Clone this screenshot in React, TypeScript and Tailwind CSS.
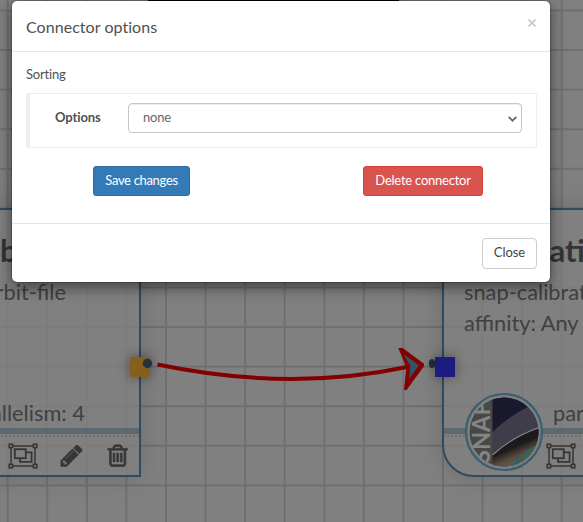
import React from "react";

const GRID = 39.57;

function GroupIcon() {
  return (
    <svg className="h-[26px] w-[30px] shrink-0" viewBox="0 0 30 26" fill="none" stroke="#363636">
      <rect x="3" y="3" width="24" height="20" strokeWidth="1.5" />
      <rect x="6.8" y="6.2" width="11" height="9" strokeWidth="1.8" />
      <path d="M18 9.3h5.6v9.6H12v-3.6" strokeWidth="1.8" />
      <g fill="#808080" strokeWidth="1.6">
        <rect x="1.2" y="1.2" width="3.4" height="3.4" />
        <rect x="25.4" y="1.2" width="3.4" height="3.4" />
        <rect x="1.2" y="21.4" width="3.4" height="3.4" />
        <rect x="25.4" y="21.4" width="3.4" height="3.4" />
      </g>
    </svg>
  );
}

function PencilIcon() {
  return (
    <svg className="size-[25.3px] shrink-0" viewBox="0 0 1792 1792" fill="#363636" stroke="#363636" strokeWidth="30">
      <path d="M491 1536l91-91-235-235-91 91v107h128v128h107zm523-928q0-22-22-22-10 0-17 7l-542 542q-7 7-7 17 0 22 22 22 10 0 17-7l542-542q7-7 7-17zm-54-192l416 416-832 832h-416v-416zm683 96q0 53-37 90l-166 166-416-416 166-165q36-38 90-38 53 0 91 38l235 234q37 39 37 91z" />
    </svg>
  );
}

function TrashIcon() {
  return (
    <svg className="size-[25.3px] shrink-0" viewBox="0 0 1792 1792" fill="#363636" stroke="#363636" strokeWidth="50">
      <path d="M704 736v576q0 14-9 23t-23 9h-64q-14 0-23-9t-9-23v-576q0-14 9-23t23-9h64q14 0 23 9t9 23zm256 0v576q0 14-9 23t-23 9h-64q-14 0-23-9t-9-23v-576q0-14 9-23t23-9h64q14 0 23 9t9 23zm256 0v576q0 14-9 23t-23 9h-64q-14 0-23-9t-9-23v-576q0-14 9-23t23-9h64q14 0 23 9t9 23zm128 724v-948h-896v948q0 22 7 40.5t14.5 27 10.5 8.5h832q3 0 10.5-8.5t14.5-27 7-40.5zm-672-1076h448l-48-117q-7-9-17-11h-317q-10 2-17 11zm928 32v64q0 14-9 23t-23 9h-96v948q0 83-47 143.5t-113 60.5h-832q-66 0-113-58.5t-47-141.5v-952h-96q-14 0-23-9t-9-23v-64q0-14 9-23t23-9h309l70-167q15-37 54-63t79-26h320q40 0 79 26t54 63l70 167h309q14 0 23 9t9 23z" />
    </svg>
  );
}

function SnapLogo() {
  return (
    <svg className="absolute left-[19.5px] top-[182px] size-[80px]" viewBox="0 0 80 80">
      <defs>
        <clipPath id="disc">
          <circle cx="40" cy="40" r="34.6" />
        </clipPath>
        <linearGradient id="earth" x1="0.3" y1="0.25" x2="0.6" y2="0.85">
          <stop offset="0" stopColor="#17171b" />
          <stop offset="0.35" stopColor="#1d1a1b" />
          <stop offset="0.65" stopColor="#5a4b40" />
          <stop offset="0.85" stopColor="#645a50" />
          <stop offset="1" stopColor="#28575a" />
        </linearGradient>
      </defs>
      <circle cx="40" cy="40" r="38" fill="#7d7d7d" stroke="#3a5f75" strokeWidth="2.2" />
      <circle cx="40" cy="40" r="35.2" fill="#929292" />
      <g clipPath="url(#disc)">
        <rect width="80" height="80" fill="#484848" />
        <rect x="28.5" width="52" height="80" fill="#3e3d49" />
        <path d="M28.5 0h52v8Q50 19 28.5 40z" fill="#19182d" />
        <path d="M28.5 63Q49 44 80 34v46H28.5z" fill="url(#earth)" />
        <path d="M28.5 63Q49 44 80 34" fill="none" stroke="#858588" strokeWidth="1.1" />
        <path d="M48 74l4-7 6-3 5-6 6-3 9-6-4 18-13 11-12 3z" fill="#2b6565" />
        <path d="M55 68l4-4 4 1 3-5 4-2 1 3-5 4-1 4-5 2zM64 60l4-4 3-1-3 5z" fill="#535a3c" />
        <path d="M50 76l6-3 5-1-4 4z" fill="#777979" />
        <text
          transform="translate(26 71) rotate(-90)"
          fill="#858585"
          fontSize="24.5"
          fontWeight="700"
          textLength="62"
          lengthAdjust="spacingAndGlyphs"
          fontFamily="Lato, sans-serif"
        >
          SNAP
        </text>
      </g>
    </svg>
  );
}

function Divider() {
  return (
    <div className="shrink-0">
      <div className="h-[6px] bg-[#5e696f]" />
      <div className="mt-px border-t-2 border-dotted border-[#6e7275]" />
    </div>
  );
}

function Canvas() {
  const columns = Array.from({ length: 15 }, (_, i) => 7.7 + i * GRID);
  const rows = Array.from({ length: 13 }, (_, i) => 10.5 + i * GRID);
  return (
    <div className="absolute inset-0 overflow-hidden bg-[#808080]">
      <svg className="absolute inset-0" width="583" height="522" stroke="#6f6f6f" strokeWidth="1.9">
        {columns.map((x) => (
          <line key={x} x1={x} x2={x} y1="0" y2="522" />
        ))}
        {rows.map((y) => (
          <line key={y} x1="0" x2="583" y1={y} y2={y} />
        ))}
      </svg>

      <section className="absolute left-[-8px] top-[208px] flex h-[269px] w-[149px] flex-col border-2 border-[#2d4c61] bg-[#808080]/80 text-[21.8px] leading-[31px] text-[#404040] shadow-[0_0_24px_rgba(0,0,0,0.15)]">
        <h2 className="mt-[20px] pl-[6px] text-[31px] font-bold leading-[40px] text-[#343434]">b</h2>
        <p className="mt-[6px] flex justify-end pr-[73px] whitespace-nowrap">rbit-file</p>
        <p className="mt-[90px] flex justify-end pr-[54px] whitespace-nowrap">allelism: 4</p>
        <div className="mt-auto">
          <Divider />
        </div>
        <div className="flex h-[40px] items-center justify-end pr-[9px]">
          <GroupIcon />
          <span className="w-[21px]" />
          <PencilIcon />
          <span className="w-[20px]" />
          <TrashIcon />
        </div>
      </section>

      <section className="absolute left-[442px] top-[208px] flex h-[269px] w-[200px] flex-col rounded-bl-[32px] border-2 border-[#2d4c61] bg-[#808080]/80 text-[21.8px] leading-[31px] text-[#404040] shadow-[0_0_24px_rgba(0,0,0,0.15)]">
        <h2 className="mt-[20px] pl-[105.5px] text-[31px] font-bold leading-[40px] text-[#343434]">ation</h2>
        <p className="mt-[6px] pl-[20px] whitespace-nowrap">snap-calibration</p>
        <p className="pl-[20px] whitespace-nowrap">affinity: Any</p>
        <p className="mt-[59px] pl-[109px] whitespace-nowrap">parallelism: 4</p>
        <div className="mt-auto">
          <Divider />
        </div>
        <div className="flex h-[40px] items-center pl-[102px]">
          <GroupIcon />
        </div>
        <SnapLogo />
      </section>

      <div className="absolute left-[130px] top-[357px] size-[20px] bg-[#855f1c] shadow-[0_0_12px_1px_rgba(0,0,0,0.35)]" />
      <svg className="absolute inset-0" width="583" height="522">
        <circle cx="147.5" cy="363.5" r="4.7" fill="#25323b" />
        <ellipse cx="432" cy="363.5" rx="3.2" ry="4.6" fill="#25323b" />
        <path d="M157.5 364.5Q290 392 407 367" fill="none" stroke="#830000" strokeWidth="4" />
        <path d="M398.3 348h4.4L424 363.8v2.4L406.6 390H404l2.3-22.5z" fill="#830000" />
        <path d="M403.6 354L419 365.2 409 379l1.3-13z" fill="#345366" />
      </svg>
      <div className="absolute left-[435px] top-[357px] size-[20px] bg-[#1c1b80] shadow-[0_0_12px_1px_rgba(0,0,0,0.35)]" />
      <div className="absolute left-[148px] top-0 h-[6px] w-[251px] bg-black" />
    </div>
  );
}

export default function App() {
  return (
    <main className="relative h-[522px] w-[583px] overflow-hidden font-[Lato,sans-serif] text-[13px] text-[#444]">
      <Canvas />
      <div
        role="dialog"
        className="relative ml-[12px] mt-px flex h-[281px] w-[538px] flex-col rounded-[5px] bg-white shadow-[0_5px_15px_rgba(0,0,0,0.5),0_0_2px_rgba(0,0,0,0.6)]"
      >
        <header className="flex h-[51px] items-center justify-between border-b border-[#e5e5e5] px-[14px]">
          <h1 className="pt-px text-[16px] leading-[20px] tracking-[0.05px] text-[#505050]">Connector options</h1>
          <button aria-label="Close dialog" className="-mt-[7px] mr-0">
            <svg className="size-[8px]" viewBox="0 0 8 8" stroke="#c8c8c8" strokeWidth="1.7">
              <path d="M.5.5l7 7M7.5.5l-7 7" />
            </svg>
          </button>
        </header>

        <div className="flex flex-1 flex-col px-[13px] pl-[14px] pt-[13px]">
          <label className="leading-[18px] tracking-[-0.2px] text-[#505050]">Sorting</label>
          <div className="mt-[10px] flex h-[55px] items-start rounded-[2px] border border-l-4 border-[#eee] pl-[25px] pr-[14px] pt-[9px]">
            <span className="w-[73px] pt-[5px] font-bold leading-[18px] tracking-[-0.1px] text-[#505050]">Options</span>
            <div className="flex h-[30px] flex-1 items-center justify-between rounded-[4px] border border-[#c6c6c6] pb-px pl-[14px] pr-[4px] text-[#666] shadow-[inset_0_1px_1px_rgba(0,0,0,0.075)]">
              <span className="tracking-[-0.2px]">none</span>
              <svg className="mt-[2px] h-[6px] w-[9px]" viewBox="0 0 9 6" fill="none" stroke="#666" strokeWidth="1.7">
                <path d="M.7.9l3.8 3.8L8.3.9" />
              </svg>
            </div>
          </div>
          <div className="mt-[18px] flex justify-between pl-[67px] pr-[54px]">
            <button className="h-[30px] w-[97px] whitespace-nowrap rounded-[3px] border border-[#2e6da4] bg-[#337ab7] pb-px tracking-[-0.32px] text-white">
              Save changes
            </button>
            <button className="h-[30px] w-[120px] whitespace-nowrap rounded-[3px] border border-[#d43f3a] bg-[#d9534f] pb-px tracking-[-0.24px] text-white">
              Delete connector
            </button>
          </div>
        </div>

        <footer className="flex h-[59px] items-start justify-end border-t border-[#e5e5e5] px-[13px] pt-[14px]">
          <button className="h-[31px] w-[55px] rounded-[4px] border border-[#ccc] pb-[2px] tracking-[-0.05px] text-[#444]">Close</button>
        </footer>
      </div>
    </main>
  );
}
